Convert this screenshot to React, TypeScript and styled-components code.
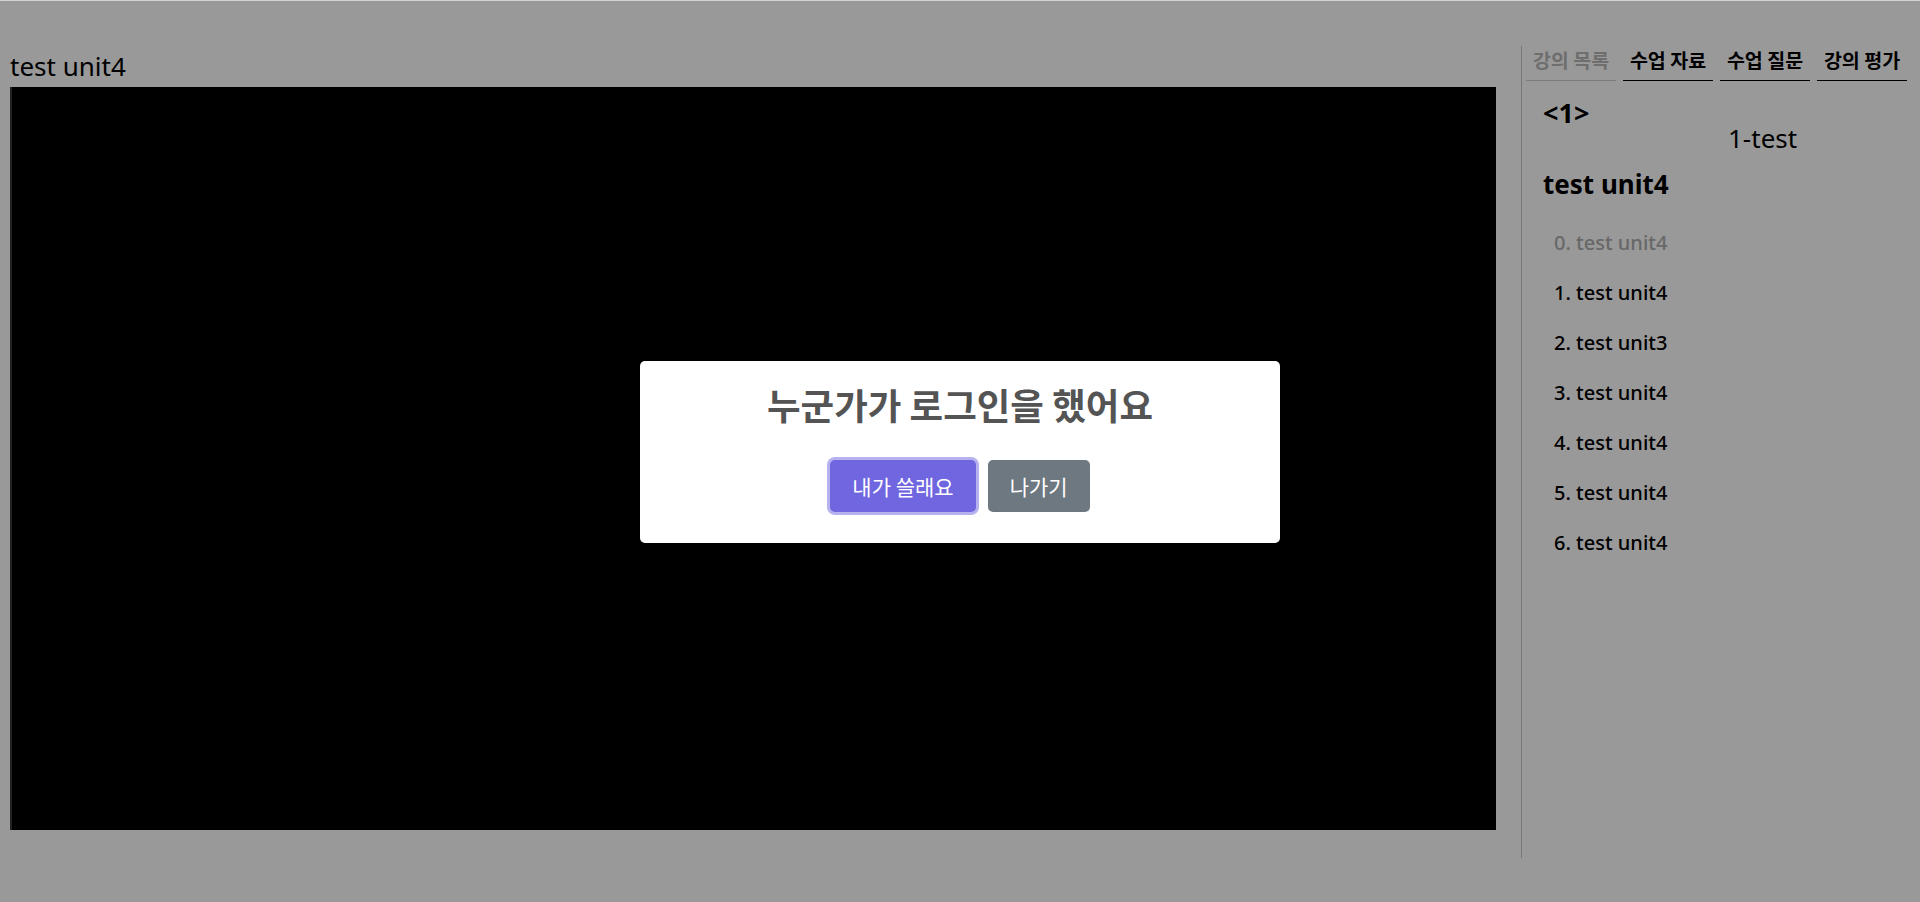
import React from "react";
import styled, { createGlobalStyle } from "styled-components";

const GlobalStyle = createGlobalStyle`
  html, body {
    margin: 0;
    padding: 0;
    background: #ffffff;
    overflow: hidden;
  }
  body {
    font-family: "Noto Sans", "Noto Sans CJK KR", sans-serif;
    color: #000;
  }
  * { box-sizing: border-box; }
`;

const Page = styled.div`
  display: flex;
  align-items: flex-start;
  width: 1920px;
  height: 902px;
`;

const Main = styled.section`
  width: 1486px;
  margin-left: 10px;
  padding-top: 48px;
  display: flex;
  flex-direction: column;
`;

const UnitTitle = styled.h2`
  margin: 0 0 3px;
  font-size: 26px;
  line-height: 36px;
  font-weight: 400;
`;

const VideoBox = styled.div`
  height: 743px;
  background: #000;
  border-left: 2px solid #3a3a3a;
`;

const Sidebar = styled.aside`
  margin-left: 25px;
  margin-top: 46px;
  height: 812px;
  width: 398px;
  border-left: 1px solid #c8c8c8;
  display: flex;
  flex-direction: column;
`;

const Tabs = styled.nav`
  display: flex;
  gap: 7px;
  padding-left: 4px;
`;

const Tab = styled.div<{ $active?: boolean }>`
  width: 90px;
  text-align: center;
  font-family: "Noto Sans CJK KR", sans-serif;
  font-weight: 700;
  font-size: 19.5px;
  line-height: 26px;
  padding: 1px 0 7px;
  color: ${(p) => (p.$active ? "#b8b8b8" : "#000")};
  border-bottom: 1px solid ${(p) => (p.$active ? "#cfcfcf" : "#000")};
  white-space: nowrap;
`;

const Content = styled.div`
  padding-left: 21px;
  display: flex;
  flex-direction: column;
`;

const ChapterRow = styled.div`
  margin-top: 14px;
  display: grid;
  grid-template-columns: 185px auto;
`;

const ChapterNo = styled.div`
  font-size: 27px;
  line-height: 36px;
  font-weight: 700;
`;

const ChapterName = styled.div`
  padding-top: 25px;
  font-size: 26px;
  line-height: 36px;
  font-weight: 400;
`;

const CurrentUnit = styled.div`
  margin-top: 10px;
  font-size: 26px;
  line-height: 36px;
  font-weight: 700;
`;

const UnitList = styled.ul`
  list-style: none;
  margin: 16px 0 0;
  padding: 0 0 0 11px;
`;

const UnitItem = styled.li<{ $current?: boolean }>`
  font-size: 20px;
  line-height: 50px;
  font-weight: 500;
  color: ${(p) => (p.$current ? "#adadad" : "#000")};
`;

const Backdrop = styled.div`
  position: fixed;
  inset: 0;
  background: rgba(0, 0, 0, 0.4);
  background-clip: padding-box;
  border-top: 1px solid #d2d2d2;
  display: flex;
  align-items: center;
  justify-content: center;
`;

const Popup = styled.div`
  width: 640px;
  background: #fff;
  border-radius: 5px;
  padding: 0 0 25px;
  display: flex;
  flex-direction: column;
  align-items: center;
  font-family: "Noto Sans CJK KR", sans-serif;
`;

const PopupTitle = styled.h2`
  margin: 0;
  padding: 18px 20px 0;
  font-size: 36.5px;
  line-height: 52px;
  font-weight: 700;
  color: #545454;
  text-align: center;
`;

const Actions = styled.div`
  display: flex;
  justify-content: center;
  margin-top: 23px;
`;

const Button = styled.button<{ $variant: "confirm" | "cancel" }>`
  margin: 6px;
  border: 0;
  border-radius: 5px;
  padding: 11px 22px;
  font-family: "Noto Sans CJK KR", sans-serif;
  font-size: 21px;
  line-height: 30px;
  color: #fff;
  background: ${(p) => (p.$variant === "confirm" ? "#7066e0" : "#6e7881")};
  box-shadow: ${(p) =>
    p.$variant === "confirm" ? "0 0 0 3px rgba(112, 102, 224, 0.5)" : "none"};
  cursor: pointer;
`;

const units = [
  "0. test unit4",
  "1. test unit4",
  "2. test unit3",
  "3. test unit4",
  "4. test unit4",
  "5. test unit4",
  "6. test unit4",
];

export default function App() {
  return (
    <>
      <GlobalStyle />
      <Page>
        <Main>
          <UnitTitle>test unit4</UnitTitle>
          <VideoBox />
        </Main>
        <Sidebar>
          <Tabs>
            <Tab $active>강의 목록</Tab>
            <Tab>수업 자료</Tab>
            <Tab>수업 질문</Tab>
            <Tab>강의 평가</Tab>
          </Tabs>
          <Content>
            <ChapterRow>
              <ChapterNo>&lt;1&gt;</ChapterNo>
              <ChapterName>1-test</ChapterName>
            </ChapterRow>
            <CurrentUnit>test unit4</CurrentUnit>
            <UnitList>
              {units.map((u, i) => (
                <UnitItem key={u + i} $current={i === 0}>
                  {u}
                </UnitItem>
              ))}
            </UnitList>
          </Content>
        </Sidebar>
      </Page>
      <Backdrop>
        <Popup>
          <PopupTitle>누군가가 로그인을 했어요</PopupTitle>
          <Actions>
            <Button $variant="confirm">내가 쓸래요</Button>
            <Button $variant="cancel">나가기</Button>
          </Actions>
        </Popup>
      </Backdrop>
    </>
  );
}
